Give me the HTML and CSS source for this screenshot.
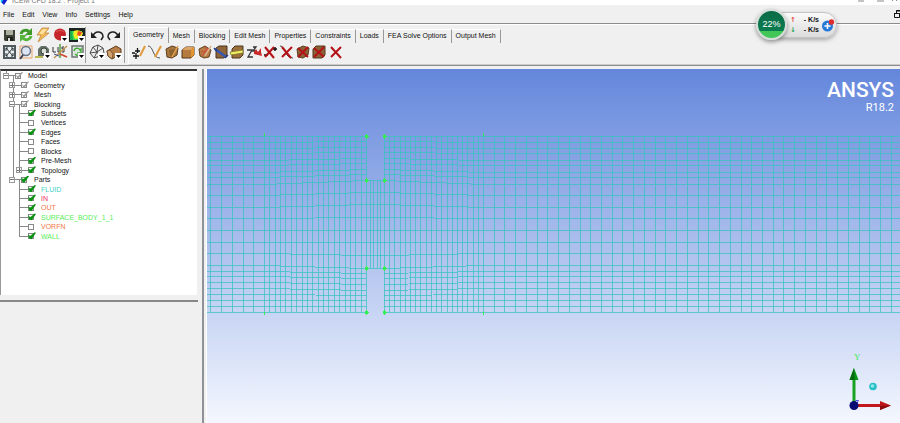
FILE: index.html
```html
<!DOCTYPE html>
<html lang="en">
<head>
    <meta charset="UTF-8">
    <meta name="viewport" content="width=device-width, initial-scale=1.0">
    <title>ICEM CFD</title>
    <link rel="stylesheet" href="styles.css">
</head>

<body>
    <header class="titlebar">
        <svg class="app-logo" viewBox="0 0 8 6"><path d="M0 0h4v3H0z" fill="#10c8e8"/><path d="M3 0h5L4 6 1 3z" fill="#1020d0"/></svg>
        <span class="title">ICEM CFD 18.2 : Project 1</span>
        <svg class="window-controls" viewBox="0 0 40 4"><path d="M0 .5h6M19 .5h7M34 .5l1-1M39 .5l-1-1" stroke="#888"/></svg>
    </header>

    <nav class="menubar">
        <button>File</button>
        <button>Edit</button>
        <button>View</button>
        <button>Info</button>
        <button>Settings</button>
        <button>Help</button>
        <button class="restore" aria-label="Restore"><svg viewBox="0 0 8 8"><path d="M2.5 3V.5h5v4H6M.5 3.5h5v4h-5zM0 3.5h6M2 1h6" fill="none" stroke="#111"/></svg></button>
    </nav>

    <section class="toolbar">
        <div class="tools tools-main">
            <button class="tool" aria-label="Save"><svg viewBox="0 0 16 16"><path d="M3 3h11v11H4l-1-1z" fill="#3d4136"/><path d="M5 3h7v5H5z" fill="#a9ae9f"/><path d="M6 10h6v4H6z" fill="#1c1f19"/><path d="M7 11h2v3H7z" fill="#ddd"/></svg></button>
            <button class="tool" aria-label="Reload"><svg viewBox="0 0 16 16"><path d="M3 7c1-4 6-5 8-2" fill="none" stroke="#3f9a2a" stroke-width="3"/><path d="M14 1v7H7z" fill="#3f9a2a"/><path d="M13 9c-1 4-6 5-8 2" fill="none" stroke="#58b53c" stroke-width="3"/><path d="M2 15V8h7z" fill="#58b53c"/></svg></button>
            <button class="tool" aria-label="Compute"><svg viewBox="0 0 16 16"><path d="M7 1h7l-4 5h4L3 15l3-7H2z" fill="#f3b75a" stroke="#b98332" stroke-width=".7"/><path d="M8 2h4L8 7H4z" fill="#ffe2a0"/></svg></button>
            <button class="tool" aria-label="Stop"><svg viewBox="0 0 16 16"><circle cx="8" cy="7.500" r="6" fill="#c6262b"/><path d="M4 5c2-2 6-2 8 0" stroke="#e05a5a" fill="none"/><path d="M9 9h7v6H9z" fill="#fff"/><path d="M10 11h5l-2.500 3z"/></svg></button>
            <button class="tool" aria-label="Contour"><svg viewBox="0 0 16 16"><path d="M0 1h16v14H0z" fill="#1a2420"/><path d="M1 4h5v9H1z" fill="#19af52"/><path d="M3 4h10v5l-4 4H4z" fill="#35dd55"/><path d="M5 4c3-2 8 0 9 2l-2 5-6 1C4 9 4 6 5 4z" fill="#f4ea25"/><path d="M9 4l4 1-2 4-3-1z" fill="#eb4c21"/><path d="M9 9h7v6H9z" fill="#fff"/><path d="M10 11h5l-2.500 3z"/></svg></button>

            <button class="tool" aria-label="Fit window"><svg viewBox="0 0 16 16"><path d="M3 2h11v12H3z" fill="#e9eef0" stroke="#4e595d" stroke-width="2"/><path d="M5 4l7 8M12 4l-7 8M5 7V4h2M10 4h2v3M5 9v3h2M10 12h2V9" fill="none" stroke="#283036"/></svg></button>
            <button class="tool" aria-label="Box zoom"><svg viewBox="0 0 16 16"><path d="M2 2h12v12H2z" fill="none" stroke="#e6a36c"/><circle cx="8" cy="7" r="4.500" fill="#dce5f3" stroke="#66707e" stroke-width="1.400"/><path d="M5 11l-3 4" stroke="#354052" stroke-width="2"/></svg></button>
            <button class="tool" aria-label="Measure"><svg viewBox="0 0 16 16"><path d="M3 12V5l3-3h5l3 3v7z" fill="#657066"/><circle cx="9" cy="7" r="3" fill="#d9ded7" stroke="#38413a"/><path d="M0 12h8v2H0z" fill="#bcb951"/><path d="M9 9h7v6H9z" fill="#fff"/><path d="M10 11h5l-2.500 3z"/></svg></button>
            <button class="tool" aria-label="Local axes"><svg viewBox="0 0 16 16"><path d="M1 3v5h3M6 3v5h2M12 3h-2v2h2v3h-2" fill="none" stroke="#333"/><path d="M8 14V0" stroke="#52a047" stroke-width="1.500"/><path d="M8 10l7 3" stroke="#d0432e" stroke-width="1.500"/><path d="M15 2L2 14" stroke="#c09552" stroke-width="1.500"/><path d="M2 10l5 2" stroke="#3b52a3"/></svg></button>
            <button class="tool" aria-label="Refresh view"><svg viewBox="0 0 16 16"><path d="M3 2h11v11H3z" fill="#dce8e1" stroke="#6d7772" stroke-width="1.500"/><path d="M5 7c1-4 5-3 6-1l1-1v4H8M11 10c-2 2-4 1-5 0" stroke="#4aab3d" stroke-width="1.500" fill="none"/><path d="M9 9h7v6H9z" fill="#fff"/><path d="M10 11h5l-2.500 3z"/></svg></button>
        </div>
        <div class="tools tools-edit">
            <button class="tool" aria-label="Undo"><svg viewBox="0 0 16 16"><path d="M4 9c2-6 10-5 10 1l-2 3" fill="none" stroke="#222" stroke-width="1.500"/><path d="M2 5v6h6z" fill="#222"/></svg></button>
            <button class="tool" aria-label="Redo"><svg viewBox="0 0 16 16"><path d="M12 9C10 3 2 4 2 10l2 3" fill="none" stroke="#222" stroke-width="1.500"/><path d="M14 5v6H8z" fill="#222"/></svg></button>
            <button class="tool" aria-label="Wireframe"><svg viewBox="0 0 16 16"><path d="M1 9l3-6 5-2 5 3 1 5-4 3-6 2zM4 3l4 5 6-4M1 9l7-1 3 4M8 8l-3 6M9 1L8 8" fill="#eee" stroke="#4c4c4c"/><path d="M9 9h7v6H9z" fill="#fff"/><path d="M10 11h5l-2.500 3z"/></svg></button>
            <button class="tool" aria-label="Solid"><svg viewBox="0 0 16 16"><path d="M1 7l9-5 5 3v5l-9 5-4-3z" fill="#b77f48" stroke="#5f3e22"/><path d="M1 7l3-1 3 4-1 5-4-3z" fill="#d3a36f" stroke="#5f3e22" stroke-width=".7"/><path d="M9 9h7v6H9z" fill="#fff"/><path d="M10 11h5l-2.500 3z"/></svg></button>
        </div>

        <div class="ribbon">
            <div class="tabs" role="tablist">
                <button class="tab active" role="tab">Geometry</button>
                <button class="tab" role="tab">Mesh</button>
                <button class="tab" role="tab">Blocking</button>
                <button class="tab" role="tab">Edit Mesh</button>
                <button class="tab" role="tab">Properties</button>
                <button class="tab" role="tab">Constraints</button>
                <button class="tab" role="tab">Loads</button>
                <button class="tab" role="tab">FEA Solve Options</button>
                <button class="tab" role="tab">Output Mesh</button>
            </div>
            <div class="ribbon-tools">
                <button class="tool" aria-label="Create point"><svg viewBox="0 0 16 16"><path d="M2 12h6M5 9v6M4 7h5M6.500 4v5M1 9h3" stroke="#111" stroke-width="1.300"/><path d="M14 2L9 12" stroke="#e09938" stroke-width="2"/></svg></button>
                <button class="tool" aria-label="Create curve"><svg viewBox="0 0 16 16"><path d="M1 2c6 0 4 12 12 12" fill="none" stroke="#555"/><path d="M14 2L8 13" stroke="#e09938" stroke-width="2"/></svg></button>
                <button class="tool" aria-label="Create surface"><svg viewBox="0 0 16 16"><path d="M2 5l6-3 6 2-1 7-5 3-5-1z" fill="#a97740" stroke="#5d4021"/><path d="M5 6l6-1v6l-5 1z" fill="#8e622f"/><path d="M14 2L8 13" stroke="#e5a44c" stroke-width="1.500"/></svg></button>
                <button class="tool" aria-label="Create body"><svg viewBox="0 0 16 16"><path d="M2 6l4-3h8v8l-3 3H2z" fill="#b57a3d" stroke="#54391d"/><path d="M2 6l4-3h8l-3 3z" fill="#dba566"/><path d="M11 6l3-3v8l-3 3z" fill="#e5942e"/></svg></button>
                <button class="tool" aria-label="Faceted"><svg viewBox="0 0 16 16"><path d="M2 5l6-3 6 4-2 7-5 1-4-2z" fill="#b67c43" stroke="#60401f"/><path d="M5 12l6-8M8 3l3 5M4 8l6-1" stroke="#d24b3e"/><path d="M14 2L8 12" stroke="#d9b28a" stroke-width="1.500"/></svg></button>
                <button class="tool" aria-label="Repair"><svg viewBox="0 0 16 16"><path d="M3 4l3-2h8v9l-3 3H3z" fill="#8d6538" stroke="#49351e"/><path d="M2 5l11 8" stroke="#3556b1" stroke-width="2.500"/><path d="M1 4l3 3M12 14l3-3" stroke="#253b82" stroke-width="1.500"/></svg></button>
                <button class="tool" aria-label="Transform"><svg viewBox="0 0 16 16"><path d="M3 5l3-3h8v9l-3 3H3z" fill="#9b6f3c" stroke="#4c381e"/><path d="M1 8l13-2v3L2 11z" fill="#f1ed63" stroke="#76702a" stroke-width=".7"/></svg></button>
                <button class="tool" aria-label="Restore dormant"><svg viewBox="0 0 16 16"><path d="M1 6h5l-4 7h5M7 3h3l-3 4h3" fill="none" stroke="#333" stroke-width="1.300"/><path d="M8 8l2-3 2 3 3-4v4l1 4-4-1-4-1z" fill="#ca2929"/></svg></button>
                <button class="tool" aria-label="Delete point"><svg viewBox="0 0 16 16"><path d="M11 5h4M13 3v4M2 11h4" stroke="#111" stroke-width="1.500"/><path class="cross" d="M3 3l9 11M12 3L3 13"/></svg></button>
                <button class="tool" aria-label="Delete curve"><svg viewBox="0 0 16 16"><path d="M1 2c6 0 4 12 13 12" fill="none" stroke="#444"/><path class="cross" d="M3 3l9 11M13 3L3 13"/></svg></button>
                <button class="tool" aria-label="Delete surface"><svg viewBox="0 0 16 16"><path d="M2 5l6-3 6 2-1 7-5 3-5-1z" fill="#8a6337" stroke="#5d4021"/><path class="cross" d="M3 4l10 9M13 3L3 13"/></svg></button>
                <button class="tool" aria-label="Delete body"><svg viewBox="0 0 16 16"><path d="M2 5l3-3h9v9l-3 3H2z" fill="#8a6337" stroke="#54391d"/><path class="cross" d="M3 4l10 9M13 3L3 13"/></svg></button>
                <button class="tool" aria-label="Delete any"><svg viewBox="0 0 16 16"><path class="cross" d="M3 3l10 11M13 3L3 13"/></svg></button>
            </div>
        </div>
    </section>

    <main class="workspace">
        <aside class="sidebar">
            <div class="tree-panel">
                <div class="tree">
                    <svg class="branches" viewBox="0 0 60 180" preserveAspectRatio="none"><path d="M5 0V5H18M12 5V115H25M12 15H25M12 25H25M12 35H25M18 35V105M18 45H31M18 55H31M18 65H31M18 75H31M18 85H31M18 95H31M18 105H31M18 115V175M18 125H31M18 135H31M18 145H31M18 155H31M18 165H31M18 175H31" vector-effect="non-scaling-stroke" shape-rendering="crispEdges"/></svg>
                    <div class="row"><i class="expander"></i><label><input type="checkbox" class="dim" checked>Model</label></div>
                    <div class="row level-1"><i class="expander closed"></i><label><input type="checkbox" class="dim" checked>Geometry</label></div>
                    <div class="row level-1"><i class="expander closed"></i><label><input type="checkbox" class="dim" checked>Mesh</label></div>
                    <div class="row level-1"><i class="expander"></i><label><input type="checkbox" class="dim" checked>Blocking</label></div>
                    <div class="row level-2"><label><input type="checkbox" checked>Subsets</label></div>
                    <div class="row level-2"><label><input type="checkbox">Vertices</label></div>
                    <div class="row level-2"><label><input type="checkbox" checked>Edges</label></div>
                    <div class="row level-2"><label><input type="checkbox">Faces</label></div>
                    <div class="row level-2"><label><input type="checkbox">Blocks</label></div>
                    <div class="row level-2"><label><input type="checkbox" checked>Pre-Mesh</label></div>
                    <div class="row level-2"><i class="expander closed"></i><label><input type="checkbox" checked>Topology</label></div>
                    <div class="row level-1"><i class="expander"></i><label><input type="checkbox" checked>Parts</label></div>
                    <div class="row level-2 part-fluid"><label><input type="checkbox" checked>FLUID</label></div>
                    <div class="row level-2 part-in"><label><input type="checkbox" checked>IN</label></div>
                    <div class="row level-2 part-out"><label><input type="checkbox" checked>OUT</label></div>
                    <div class="row level-2 part-wall"><label><input type="checkbox" checked>SURFACE_BODY_1_1</label></div>
                    <div class="row level-2 part-out"><label><input type="checkbox">VORFN</label></div>
                    <div class="row level-2 part-wall"><label><input type="checkbox" checked>WALL</label></div>
                </div>
            </div>
        </aside>

        <section class="viewport">
            <svg class="mesh" id="mesh"></svg>
            <div class="brand">
                <span class="brand-name">ANSYS</span>
                <span class="brand-version">R18.2</span>
            </div>
            <svg class="triad" viewBox="0 0 46 64">
                <text x="4" y="8">Y</text>
                <path d="M2.500 53V27h3v26z" fill="#18a322"/>
                <path d="M4 16l4.500 12h-9z" fill="#089a16"/>
                <path d="M4 16l1 12H-.5z" fill="#056d0e"/>
                <path d="M5 52h27v3H5z" fill="#c21a1c"/>
                <path d="M41 53.500L30 49v9z" fill="#bd1518"/>
                <path d="M41 53.500L30 54v4z" fill="#8a0c0f"/>
                <path d="M5.500 48.500h3l-2 3" fill="none" stroke="#5552e8"/>
                <circle cx="4" cy="53.500" r="4.500" fill="#080b72"/>
                <circle cx="23" cy="34.500" r="3.800" fill="#27bfc7"/>
                <circle cx="22.500" cy="34" r="1.800" fill="#8ee9ea"/>
            </svg>
        </section>
    </main>

    <div class="monitor">
        <div class="speeds">
            <span class="arrow up">&#8593;</span><span>- K/s</span>
            <span class="arrow down">&#8595;</span><span>- K/s</span>
        </div>
        <svg class="boost" viewBox="0 0 14 14"><circle cx="6.500" cy="8" r="5.500" fill="#2878d8"/><path d="M6.500 5v6M3.500 8h6" stroke="#fff" stroke-width="1.500"/><circle cx="10.500" cy="4" r="2.700" fill="#df2d2b"/></svg>
        <div class="usage">22%</div>
    </div>

    <script src="mesh.js"></script>
</body>
</html>
```

FILE: styles.css
```css
* {
    margin: 0;
    padding: 0;
    box-sizing: border-box;
}

body {
    position: relative;
    display: flex;
    flex-direction: column;
    min-height: 100vh;
    overflow: hidden;
    background-color: #f0f0f0;
    color: #111;
    font-family: 'Liberation Sans', Arial, sans-serif;
    font-size: 7px;
    line-height: 9px;
}

button {
    background: none;
    border: none;
    color: inherit;
    font: inherit;
}

svg {
    display: block;
}

.titlebar {
    display: flex;
    align-items: flex-end;
    height: 5px;
    overflow: hidden;
    background-color: #fff;
}

.app-logo {
    width: 8px;
    height: 5px;
}

.title {
    flex: 1;
    padding-left: 4px;
    color: #777;
}

.window-controls {
    width: 40px;
    height: 5px;
    margin-right: 2px;
}

.menubar {
    display: flex;
    align-items: center;
    gap: 8px;
    height: 19px;
    padding-left: 3px;
    border-bottom: 1px solid #8c8c8c;
}

.restore {
    margin-left: auto;
    margin-right: -2px;
}

.restore svg {
    width: 8px;
    height: 8px;
}

/* toolbar */
.toolbar {
    display: flex;
    height: 42px;
    padding-top: 2px;
    border-top: 1px solid #fff;
    border-bottom: 1px solid #8c8c8c;
}

.tools {
    display: grid;
    align-content: start;
    gap: 1px;
    height: 36px;
    border-right: 1px solid #9a9a9a;
}

.tools-main {
    grid-template-columns: repeat(5, 16px);
    padding-left: 1px;
}

.tools-edit {
    grid-template-columns: repeat(2, 16px);
    padding: 0 2px 0 3px;
}

.tool,
.tool svg {
    width: 16px;
    height: 16px;
}

.cross {
    stroke: #b31217;
    stroke-width: 2;
}

.ribbon {
    flex: 1;
    margin-left: 3px;
    border-left: 1px solid #fff;
    border-bottom: 1px solid #ccc;
}

.tabs {
    display: flex;
    align-items: flex-end;
    height: 16px;
}

.tab {
    height: 14px;
    padding: 0 4px 2px;
    border-right: 1px solid #999;
    border-top: 1px solid #fff;
    white-space: nowrap;
}

.tab.active {
    height: 16px;
    padding-bottom: 3px;
}

.ribbon-tools {
    display: flex;
    justify-content: space-between;
    width: 215px;
    padding-top: 1px;
    padding-left: 2px;
}

/* model tree */
.workspace {
    flex: 1;
    display: flex;
    padding-top: 3px;
}

.sidebar {
    width: 204px;
    border-right: 2px solid #8f9296;
}

.tree-panel {
    width: 198px;
    height: 233px;
    padding-bottom: 6px;
    border-bottom: 2px solid #888;
}

.tree {
    position: relative;
    display: grid;
    grid-template-rows: repeat(18, 1fr);
    width: 197px;
    height: 226px;
    padding-bottom: 54px;
    background-color: #fff;
    border-top: 2px solid #333;
    border-left: 1px solid #999;
}

.branches {
    position: absolute;
    top: 0;
    left: 0;
    width: 60px;
    height: 170px;
    fill: none;
    stroke: #888;
}

.row {
    position: relative;
    display: flex;
    align-items: center;
    justify-content: flex-start;
    padding-left: 14px;
}

.level-1 {
    padding-left: 20px;
}

.level-2 {
    padding-left: 27px;
}

.row label {
    display: flex;
    align-items: center;
    gap: 7px;
}

.expander {
    width: 6px;
    height: 6px;
    margin: 0 6px 0 -12px;
    background: linear-gradient(#777, #777) center / 4px 1px no-repeat #fff;
    border: 1px solid #999;
}

.expander.closed {
    background: linear-gradient(#777, #777) center / 4px 1px no-repeat, linear-gradient(#777, #777) center / 1px 4px no-repeat #fff;
}

.row input {
    position: relative;
    appearance: none;
    width: 6px;
    height: 6px;
    background-color: #fff;
    border: 1px solid #888;
}

.row input:checked::after {
    content: '';
    position: absolute;
    top: -2px;
    left: -1px;
    width: 8px;
    height: 7px;
    background-color: #0a9212;
    clip-path: polygon(0 35%, 30% 50%, 85% 0, 100% 8%, 45% 100%, 20% 100%);
}

.row input.dim:checked::after {
    background-color: #999;
    clip-path: polygon(10% 45%, 35% 65%, 90% 0, 100% 8%, 45% 90%, 30% 90%);
}

.part-fluid {
    color: #48cfc5;
}

.part-in {
    color: #ed2f62;
}

.part-out {
    color: #f47643;
}

.part-wall {
    color: #59ed59;
}

/* 3D view */
.viewport {
    position: relative;
    flex: 1;
    margin-left: 2px;
    overflow: hidden;
    background: linear-gradient(#6487dc, #f4f7fe);
    border-left: 1px solid #fff;
}

.mesh {
    position: absolute;
    top: 0;
    left: 0;
    width: 100%;
    height: 100%;
    fill: none;
    stroke: #38c3bf;
    stroke-opacity: 0.75;
    shape-rendering: crispEdges;
}

.mesh .node {
    stroke: #35ee55;
    stroke-opacity: 1;
}

.brand {
    position: absolute;
    top: 9px;
    right: 6px;
    display: flex;
    flex-direction: column;
    align-items: flex-end;
    color: #fff;
    font-family: Roboto, 'Liberation Sans', sans-serif;
}

.brand-name {
    font-size: 21px;
    font-weight: 500;
    line-height: 24px;
}

.brand-version {
    font-size: 11px;
    line-height: 11px;
}

.triad {
    position: absolute;
    right: 4px;
    bottom: 7px;
    width: 46px;
    height: 64px;
    overflow: visible;
}

.triad text {
    fill: #43e858;
    font-family: 'Liberation Serif', serif;
    font-size: 9px;
}

/* floating network monitor */
.monitor {
    position: absolute;
    top: 12px;
    right: 63px;
    display: flex;
    align-items: center;
    width: 66px;
    height: 26px;
    padding-left: 18px;
    background: linear-gradient(#fafafa, #dcdcdc);
    border: 1px solid #c4c4c4;
    border-radius: 13px;
    box-shadow: 0 2px 4px rgba(0, 0, 0, 0.3);
}

.speeds {
    display: grid;
    grid-template-columns: 8px 21px;
    font-weight: bold;
    line-height: 10px;
    text-align: right;
}

.arrow {
    font-family: 'DejaVu Sans', sans-serif;
    text-align: left;
}

.up {
    color: #e2483d;
}

.down {
    color: #2ea35c;
}

.boost {
    width: 14px;
    height: 14px;
    margin-left: 2px;
}

.usage {
    position: absolute;
    top: -4px;
    left: -16px;
    width: 31px;
    height: 31px;
    background: linear-gradient(#0a6b47, #0b7c50 74%, #42c657 75%);
    border: 2px solid #d5ddd8;
    border-radius: 50%;
    box-shadow: 0 2px 4px rgba(0, 0, 0, 0.4);
    color: #fff;
    font-size: 9px;
    line-height: 26px;
    text-align: center;
}
```

FILE: mesh.js
```javascript
const svg = document.getElementById('mesh');

// row heights far from the baffles and next to them
const outer = [67, 73, 79, 84, 91, 96, 103, 108, 115, 126, 138, 149, 161, 173, 184, 196, 202, 207, 213, 219, 225, 231, 237, 243];
const inner = [67, 72, 78, 83, 89, 94, 100, 105, 111, 123, 135, 148, 161, 173, 186, 199, 204, 209, 215, 221, 226, 231, 237, 243];

const blockLeft = 57;
const baffleLeft = 159;
const baffleRight = 177;
const blockRight = 276;
const coarse = 10.73;

function draw(d, className) {
    const path = document.createElementNS('http://www.w3.org/2000/svg', 'path');
    path.setAttribute('d', d);
    if (className) {
        path.setAttribute('class', className);
    }
    svg.appendChild(path);
}

function column(x, top, bottom) {
    draw(`M${Math.round(x) + 0.5} ${top}V${bottom}`);
}

function drawMesh() {
    const width = svg.clientWidth;
    const top = outer[0];
    const bottom = outer[outer.length - 1];
    svg.replaceChildren();

    for (let x = blockLeft; x > 0; x -= coarse) {
        column(x, top, bottom);
    }
    for (let i = 1; i <= 19; i++) {
        column(blockLeft + i * (baffleLeft - blockLeft) / 19, top, bottom);
    }
    for (let i = 1; i < 5; i++) {
        column(baffleLeft + i * 3.6, inner[8], inner[15]);
    }
    for (let i = 0; i < 19; i++) {
        column(baffleRight + i * (blockRight - baffleRight) / 19, top, bottom);
    }
    for (let x = blockRight; x < width; x += coarse) {
        column(x, top, bottom);
    }

    outer.forEach((y, i) => {
        const a = y + 0.5;
        const b = inner[i] + 0.5;
        const open = i >= 8 && i <= 15;
        draw(`M0 ${a}H${blockLeft}L${baffleLeft} ${b}${open ? 'H' : 'M'}${baffleRight}${open ? '' : ' ' + b}L${blockRight} ${a}H${width}`);
    });

    for (const x of [baffleLeft, baffleRight]) {
        for (const y of [67, 111, 199, 243]) {
            draw(`M${x - 1} ${y - 0.5}h3M${x - 1} ${y + 0.5}h4M${x - 1} ${y + 1.5}h3M${x + 0.5} ${y - 2}v5`, 'node');
        }
    }
    for (const x of [blockLeft, blockRight]) {
        draw(`M${x + 0.5} 64v3M${x + 0.5} 243v3`, 'node');
    }
}

drawMesh();
window.addEventListener('resize', drawMesh);
```
